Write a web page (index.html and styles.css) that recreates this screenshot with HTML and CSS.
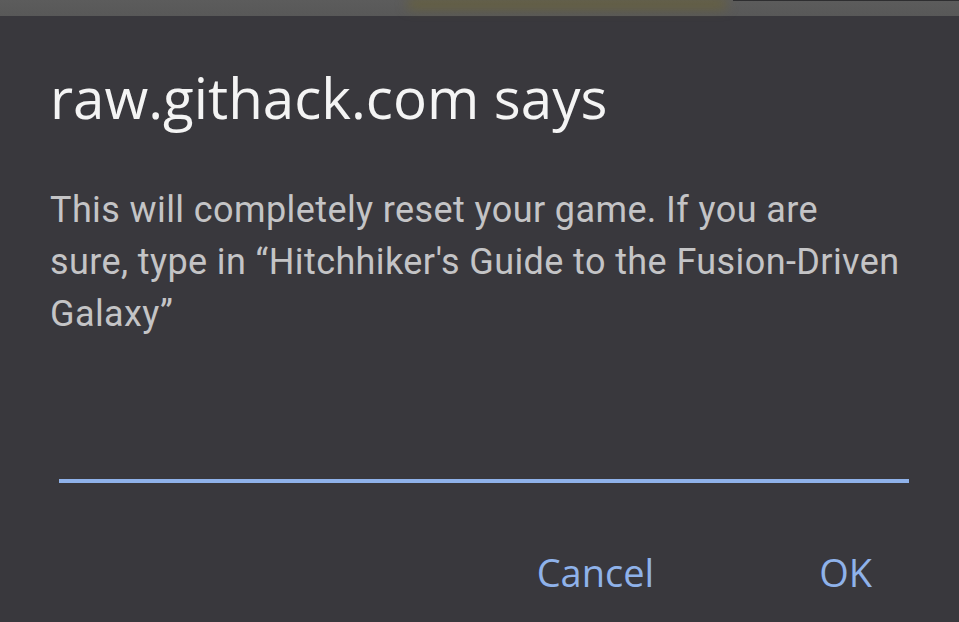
FILE: index.html
```html
<!DOCTYPE html>
<html lang="en">
<head>
    <meta charset="UTF-8">
    <meta name="viewport" content="width=device-width, initial-scale=1.0">
    <title>raw.githack.com says</title>
    <link rel="stylesheet" href="styles.css">
</head>
<body>
    <div class="page-strip">
        <div class="strip-glow"></div>
        <div class="strip-edge"></div>
    </div>

    <div class="dialog">
        <h1 class="dialog-title">raw.githack.com says</h1>
        <p class="dialog-message">This will completely reset your game. If you are<br>sure, type in “Hitchhiker's Guide to the Fusion-Driven Galaxy”</p>

        <input class="dialog-input" type="text" aria-label="Confirmation text">

        <div class="dialog-actions">
            <button class="dialog-button" type="button">Cancel</button>
            <button class="dialog-button" type="button">OK</button>
        </div>
    </div>
</body>
</html>
```

FILE: styles.css
```css
body {
    margin: 0;
    padding: 0;
    background-color: #39383d;
    font-family: Roboto, "Liberation Sans", sans-serif;
    height: 622px;
    overflow: hidden;
}

.page-strip {
    position: relative;
    height: 16px;
    background: linear-gradient(#5c5c5c, #585858);
}

.strip-glow {
    position: absolute;
    left: 408px;
    width: 318px;
    top: 0;
    height: 8px;
    background: #6a6235;
    filter: blur(6px);
}

.strip-edge {
    position: absolute;
    left: 733px;
    right: 0;
    top: 0;
    height: 1px;
    background: #2e2e30;
}

.dialog {
    padding: 0 50px;
}

.dialog-title {
    margin: 0;
    padding-top: 50px;
    font-family: "Open Sans", Roboto, sans-serif;
    font-weight: 400;
    font-size: 56.5px;
    line-height: 64px;
    color: #f4f4f4;
}

.dialog-message {
    margin: 54px 0 0 0;
    font-size: 36px;
    line-height: 52px;
    letter-spacing: 0.4px;
    color: #c4c4c6;
}

.dialog-input {
    display: block;
    box-sizing: border-box;
    width: 850px;
    margin: 123px 0 0 9px;
    height: 20px;
    padding: 0;
    border: none;
    border-bottom: 4px solid #8fb2ea;
    background: transparent;
    outline: none;
}

.dialog-actions {
    display: flex;
    justify-content: flex-end;
    gap: 165px;
    margin-top: 67px;
    padding-right: 37px;
}

.dialog-button {
    padding: 0;
    border: none;
    background: transparent;
    font-family: "Open Sans", Roboto, sans-serif;
    font-size: 38px;
    line-height: 44px;
    color: #8fb2ea;
    cursor: pointer;
}
```
